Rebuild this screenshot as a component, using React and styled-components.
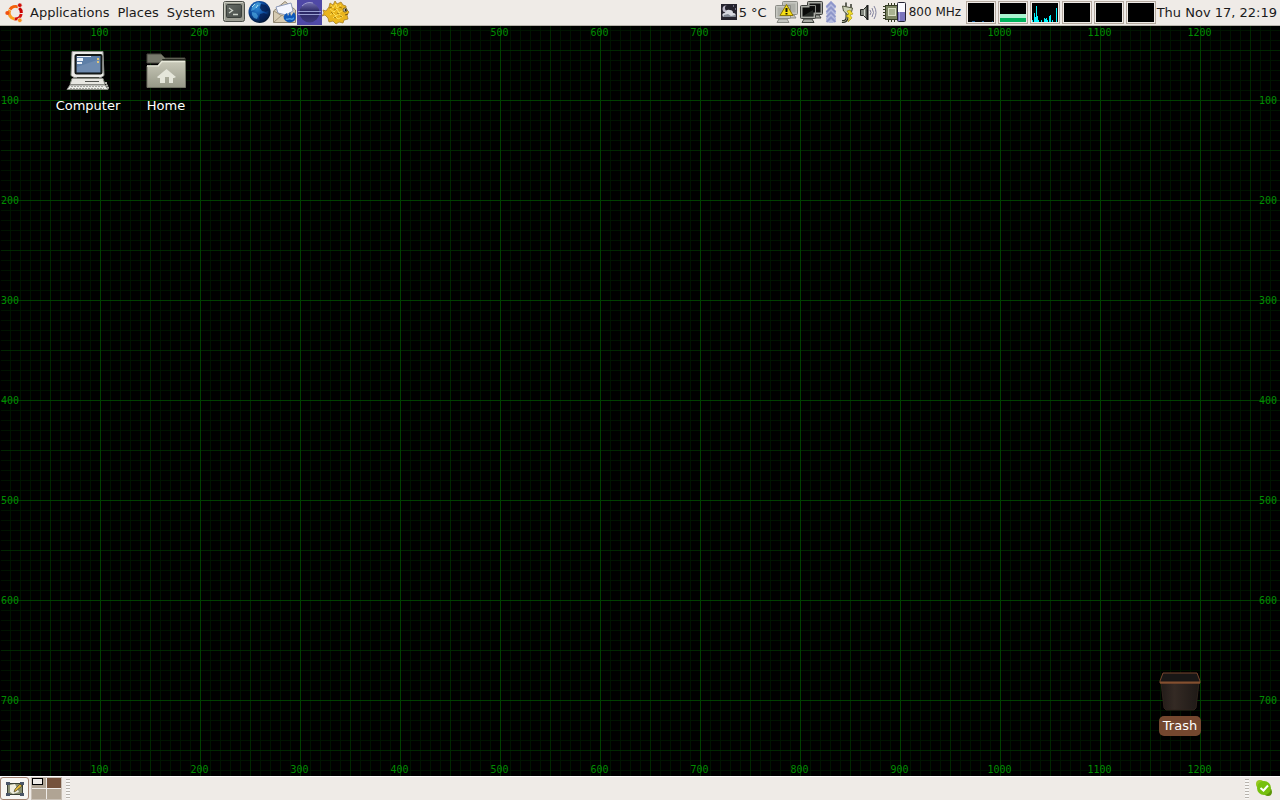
import React from "react";
import styled, { createGlobalStyle } from "styled-components";

const GlobalStyle = createGlobalStyle`
  *, *::before, *::after { box-sizing: border-box; }
  body { margin: 0; background: #000; font-family: "DejaVu Sans", sans-serif; font-size: 13px; color: #1a1a1a; }
  svg { display: block; flex: none; }
`;

const Screen = styled.div`
  display: flex;
  flex-direction: column;
  height: 100vh;
  overflow: hidden;
`;

const Panel = styled.header`
  display: flex;
  align-items: stretch;
  justify-content: space-between;
  height: 26px;
  flex: none;
  background: #efebe7;
  border-bottom: 1px solid #b9b4ad;
`;

const BottomPanel = styled(Panel).attrs({ as: "footer" })`
  height: 24px;
  border-bottom: 0;
  border-top: 1px solid #fff;
`;

const Group = styled.div`
  display: flex;
  align-items: stretch;
`;

const MenuBar = styled(Group)`
  padding-left: 1px;
`;

const PlainButton = styled.button`
  display: flex;
  align-items: center;
  margin: 0;
  padding: 0;
  border: 0;
  background: none;
  font: inherit;
  color: inherit;
  line-height: 25px;
  white-space: nowrap;
`;

const MenuButton = styled(PlainButton)`
  padding: 0 4px;
  gap: 5px;
`;

const Launchers = styled.nav`
  display: flex;
  margin-left: 3px;
`;

const TrayText = styled.span`
  min-width: ${(p) => p.$width}px;
  padding-left: 1px;
  line-height: 25px;
  font-size: ${(p) => p.$size || 13}px;
  white-space: nowrap;
`;

const Graphs = styled.div`
  display: flex;
  gap: 2px;
  padding: 1px 0 1px;
`;

const Graph = styled.div`
  width: 30px;
  height: 23px;
  border: 1px solid #b5aaa0;
  padding: 1px;
  background: #efebe7;
`;

const Clock = styled.time`
  padding: 0 3px 0 1px;
  line-height: 25px;
  white-space: nowrap;
`;

const Desktop = styled.main`
  position: relative;
  flex: 1;
  min-height: 0;
  overflow: hidden;
  display: flex;
  flex-direction: column;
  border-left: 1px solid #000;
  background-color: #000;
  background-image:
    linear-gradient(to right, #004000 1px, transparent 1px),
    linear-gradient(to bottom, #004000 1px, transparent 1px),
    linear-gradient(to right, #002800 1px, transparent 1px),
    linear-gradient(to bottom, #002800 1px, transparent 1px),
    linear-gradient(to right, #001400 1px, transparent 1px),
    linear-gradient(to bottom, #001400 1px, transparent 1px);
  background-origin: border-box;
  background-size: 100px 100px, 100px 100px, 50px 50px, 50px 50px, 10px 10px, 10px 10px;
  background-position: 0 -26px;
`;

const HorizontalRuler = styled.div`
  display: flex;
  flex: none;
  height: 13px;
  padding-left: 49px;
  overflow: hidden;
  color: #008c00;
  font: 10px/13px "DejaVu Sans Mono", monospace;
  span { flex: none; width: 100px; padding-right: 1px; text-align: center; }
`;

const Middle = styled.div`
  display: flex;
  flex: 1;
  min-height: 0;
`;

const VerticalRuler = styled.div`
  flex: none;
  width: 22px;
  padding: 12px 3px 0 0;
  overflow: hidden;
  color: #008c00;
  font: 10px/100px "DejaVu Sans Mono", monospace;
  text-align: ${(p) => p.$align};
  span { display: block; height: 100px; }
`;

const IconArea = styled.div`
  display: flex;
  flex: 1;
  align-items: flex-start;
  padding: 10px 0 0 26px;
`;

const DesktopIcon = styled(PlainButton)`
  flex-direction: column;
  width: 78px;
  gap: 3px;
  color: #fff;
`;

const IconLabel = styled.span`
  padding: 0 4px;
  border-radius: 5px;
  line-height: 20px;
  background: ${(p) => (p.$selected ? "#74472f" : "transparent")};
`;

const TrashSpot = styled.div`
  position: absolute;
  right: 61px;
  bottom: 40px;
`;

const ShowDesktop = styled(PlainButton)`
  justify-content: center;
  width: 29px;
  border: 1px solid #a48675;
  border-radius: 3px;
  background: #f8f6f3;
`;

const Switcher = styled.div`
  display: grid;
  grid-template-columns: 14px 14px;
  grid-template-rows: 10px 10px;
  gap: 1px;
  margin: 0 4px 0 2px;
  align-self: center;
  border: 1px solid #c9c0b5;
  background: #efebe7;
`;

const Workspace = styled.button`
  display: flex;
  align-items: flex-start;
  padding: 0;
  border: 0;
  background: ${(p) => (p.$active ? "#75523c" : "#b0a494")};
`;

const MiniWindow = styled.span`
  width: 11px;
  height: 7px;
  border: 1px solid #000;
  background: #efebe7;
`;

const Grip = styled.div`
  width: 4px;
  margin: 2px 0 1px;
  background: repeating-linear-gradient(#b8b3ad 0 1px, #f8f7f5 1px 3px);
`;

const Tray = styled.div`
  display: flex;
  align-items: center;
  padding: 0 7px 2px 6px;
`;

const UbuntuIcon = () => (
  <svg width="20" height="24" viewBox="0 0 20 24" fill="none">
    <path d="M5.3 15.5A6.3 6.3 0 0 1 4.8 9" stroke="#f79a2c" strokeWidth="3" />
    <path d="M5 8.6A6.3 6.3 0 0 1 13 6" stroke="#f4600a" strokeWidth="3" />
    <path d="M14.2 6.9A6.3 6.3 0 0 1 16.3 12" stroke="#c80000" strokeWidth="3" />
    <path d="M16.2 13A6.3 6.3 0 0 1 9.5 18" stroke="#d4100c" strokeWidth="3" />
    <path d="M9.5 18A6.3 6.3 0 0 1 5 15" stroke="#fca01c" strokeWidth="3" />
    <circle cx="2.4" cy="12" r="2.1" fill="#f25010" />
    <circle cx="14.8" cy="4.2" r="2.3" fill="#d01008" stroke="#efebe7" strokeWidth=".7" />
    <circle cx="14.8" cy="19.3" r="2.3" fill="#fc8c18" stroke="#efebe7" strokeWidth=".7" />
  </svg>
);

const TerminalIcon = () => (
  <svg width="25" height="25" viewBox="0 0 25 25">
    <defs>
      <linearGradient id="term" x2="1" y2="1"><stop stopColor="#666b66" /><stop offset="1" stopColor="#454a46" /></linearGradient>
    </defs>
    <rect x="1.5" y="1.5" width="21" height="20" rx="2" fill="#9d9e94" stroke="#4c4e49" />
    <path d="M2.5 20V2.5H21" stroke="#c9cabf" fill="none" />
    <rect x="4.5" y="4.5" width="15" height="13" rx="1" fill="url(#term)" stroke="#3a3f3b" />
    <path d="M7 8l3.5 2.5L7 13M11 14.5h5" stroke="#cfd4cb" strokeWidth="1.3" fill="none" />
  </svg>
);

const GlobeIcon = () => (
  <svg width="25" height="25" viewBox="0 0 25 25">
    <defs>
      <radialGradient id="globe" cx=".4" cy=".35" r=".65">
        <stop offset="0" stopColor="#2c86d4" /><stop offset=".6" stopColor="#0a4496" /><stop offset="1" stopColor="#031634" />
      </radialGradient>
    </defs>
    <circle cx="12.5" cy="12" r="11" fill="url(#globe)" />
    <path d="M7 4l4-2 3 1-1 3-3 1-3 3-3 1 1-4zM5 12l4 1 2 3-1 3-3-1-2-3z" fill="#56b4e8" opacity=".6" />
    <path d="M14 4l5 1 3 5-3 2-4-1-2-3zM13 14l4-1 4 2-3 5-4 2-2-4z" fill="#041c4c" opacity=".75" />
    <path d="M5 7l3-3M9 8l2-3" stroke="#a9def4" />
  </svg>
);

const MailIcon = () => (
  <svg width="25" height="25" viewBox="0 0 25 25">
    <path d="M1.500 11L13 1.500l10.500 8.500v12.500h-22z" fill="#d8ceb9" stroke="#8f846f" />
    <path d="M4 7l15-4 2 8-7 4-8-2z" fill="#f4f6ff" stroke="#8d9ab8" />
    <path d="M2 11l9 6 12-6v11H2z" fill="#d7cbb2" />
    <path d="M2 22l8-7 4 3" fill="none" stroke="#a1957c" />
    <path d="M2 11l8 5" stroke="#a1957c" />
    <path d="M12 19c-1-3 1-5 3-6l1 3 2-4 1 4 3-4c3 5 2 9-2 10-3 1-6 0-8-3z" fill="#0f58b8" />
    <path d="M14 19c2 1 3-1 5 0s2-1 3-1" stroke="#4b9ae4" strokeWidth="1.500" fill="none" />
  </svg>
);

const EclipseIcon = () => (
  <svg width="25" height="25" viewBox="0 0 25 25">
    <defs>
      <linearGradient id="orb" x2="0" y2="1">
        <stop stopColor="#7370b0" /><stop offset=".45" stopColor="#2a2764" /><stop offset="1" stopColor="#3f3b7c" />
      </linearGradient>
    </defs>
    <path fill="#4f48a6" d="M0 0h25v25H0z" />
    <circle cx="12.500" cy="12.500" r="10" fill="url(#orb)" />
    <path d="M1 11.500h23M1 14.500h23" stroke="#9aa0d2" />
    <path d="M5 6Q10 1 16 3" stroke="#9a98cc" fill="none" />
  </svg>
);

const FishIcon = () => (
  <svg width="28" height="25" viewBox="0 0 28 25">
    <path d="M1 10l3 1 3-4 1-4 3 2 2-4 2 3 4-2 2 3 3 1v3l3 3-2 3 1 4-4 1-1 3-4-1-3 2-3-3-4 1-1-4-3-3-3 1 2-3z" fill="#e9b41d" stroke="#a88024" strokeWidth=".8" />
    <path d="M9 5l2 3 3-4 1 4 4-3M8 9l4 3 3-3 2 4 4-3M8 15l3-2 3 3 3-2 4 3M11 18l2-2 3 3 4-2" stroke="#ffdf55" fill="none" />
    <path d="M7 8l3-1M12 9l2 1M17 7l3 1M9 12l2 2M15 13l2 1M12 17l2 1M18 16l2 1" stroke="#a57d12" />
    <circle cx="23" cy="10" r="2" fill="#f5f1dd" stroke="#6a591f" /><circle cx="23.500" cy="10" r="1" fill="#111" />
    <path d="M23 15l3-1" stroke="#785914" />
  </svg>
);

const WeatherIcon = () => (
  <svg width="18" height="25" viewBox="0 0 18 25">
    <path fill="#25232d" d="M1 4h16v16H1z" />
    <circle cx="6" cy="9" r="3.500" fill="#bdb9c7" /><circle cx="8" cy="8" r="3" fill="#25232d" />
    <path d="M3 17q-2-4 2-4 1-4 5-3 3 0 3 3 4 0 2 4z" fill="#d7d9e0" />
    <path d="M3 17h13l-1-2-4 1-3-2-4 1z" fill="#828894" /><path d="M13 6h1M15 9h1" stroke="#c1bde0" />
  </svg>
);

const Monitors = ({ warning }) => (
  <svg width="25" height="25" viewBox="0 0 25 25">
    <g stroke={warning ? "#8b8c86" : "#3e403c"} fill={warning ? "#c6c7c1" : "#a9aba4"}>
      <path d="M13 15h7l2 3H12z" /><rect x="8.500" y="1.500" width="15" height="13" rx="1" />
      <path d="M5 19h8l2 3.500H3z" /><rect x="1.500" y="5.500" width="15" height="13" rx="1" />
    </g>
    <rect x="10.500" y="3.500" width="11" height="9" fill={warning ? "#adafa8" : "#111"} />
    <path d="M8.500 5.500h8v9" stroke={warning ? "#8b8c86" : "#8e908a"} fill="none" />
    <rect x="3.500" y="7.500" width="11" height="9" fill={warning ? "#adafa8" : "#090a09"} />
    {!warning && <path d="M4 16l10-6v6z" fill="#262a26" />}
    {warning && <><path d="M12.500 4.500L6 15.500h13z" fill="#f7df13" stroke="#8d7805" strokeLinejoin="round" /><path d="M12.500 8v4M12.500 13v1.500" stroke="#171408" strokeWidth="2" /></>}
  </svg>
);

const ArrowsIcon = () => (
  <svg width="14" height="25" viewBox="0 0 14 25">
    <path d="M7 1l5 5v2l-2 1 2 3v2l-2 1 2 3v2l-3 3H5l-3-3v-2l2-3-2-1v-2l2-3-2-1V6z" fill="#b7bcdf" />
    <path d="M2.500 7L7 2.500 11.500 7M2.500 12L7 7.500l4.500 4.500M2.500 17L7 12.500l4.500 4.500M2.500 22L7 17.500l4.500 4.500" stroke="#8f97ca" strokeWidth="2" fill="none" />
  </svg>
);

const PlugIcon = () => (
  <svg width="18" height="25" viewBox="0 0 18 25">
    <path d="M9 12v5q0 5-5 4.500" fill="none" stroke="#292c20" strokeWidth="3" />
    <path d="M9 13v4q0 5-5 4.500" fill="none" stroke="#a8ad91" />
    <path d="M8 7V2.500M13 8V4" stroke="#34372c" strokeWidth="1.500" />
    <path d="M4.500 6l10 2-1 4-4 2.500-4-3.500z" fill="#ccd0b7" stroke="#50543e" />
    <path d="M12 10l3 4-3 1 2 3-4 4 1-4-3-2 3-2-2-3z" fill="#f2dd23" stroke="#a19012" strokeWidth=".6" />
  </svg>
);

const SpeakerIcon = () => (
  <svg width="24" height="25" viewBox="0 0 24 25">
    <path d="M4.500 9.500h3l4-4v14l-4-4h-3z" fill="#84887e" stroke="#262824" /><path d="M8.500 9.500V16" stroke="#d8dbd2" />
    <path d="M11.500 5v15" stroke="#1b1c1a" strokeWidth="2" />
    <path d="M14 10q2 2.500 0 5M16 8q3 4.500 0 9M18 6q4 6.500 0 13" fill="none" stroke="#83839f" />
  </svg>
);

const CpuIcon = () => (
  <svg width="28" height="25" viewBox="0 0 28 25">
    <path d="M3 6.500h3M3 9.500h3M3 12.500h3M3 15.500h3M3 18.500h3M8.500 3v4M11.500 3v4M14.500 3v4M8.500 18v4M11.500 18v4M14.500 18v4" stroke="#343a22" />
    <rect x="5.500" y="5.500" width="13" height="14" fill="#7d8663" stroke="#353d25" />
    <rect x="8.500" y="8.500" width="7" height="7" fill="#a9b391" stroke="#dbe1c7" />
    <rect x="17.500" y="2.500" width="8" height="19" rx="1" fill="#fafaff" stroke="#252435" />
    <path fill="#7974bc" d="M18 12h7v9h-7z" /><path stroke="#aaa5df" d="M19.500 12v9" />
  </svg>
);

const GraphFace = ({ kind }) => (
  <svg width="26" height="19" viewBox="0 0 26 19" shapeRendering="crispEdges">
    <path fill="#000" d="M0 0h26v19H0z" />
    {kind === "cpu" && <path fill="#12598d" d="M4 18h3v1H4zM14 18h2v1h-2zM24 18h1v1h-1z" />}
    {kind === "memory" && <><path fill="#aaf5d0" d="M0 11h26v4H0z" /><path fill="#00b35b" d="M0 15h26v4H0z" /></>}
    {kind === "network" && <path stroke="#00f5ff" d="M.5 19v-2M2.500 19v-9M3.500 19v-5M4.500 19V3M5.500 19v-6M6.500 19v-2M9.500 19v-2M12.500 19v-4M13.500 19v-3M14.500 19v-4M15.500 19v-2M17.500 19v-6M18.500 19v-7M20.500 19v-2M24.500 19V5" />}
  </svg>
);

const ComputerIcon = () => (
  <svg width="48" height="44" viewBox="0 0 48 44">
    <path d="M8 2.500h31l1 24-3 2H10l-3-2z" fill="#ecece8" stroke="#8c8d88" />
    <rect x="11.500" y="6" width="26" height="18.500" rx="1" fill="#5e7fa7" stroke="#141817" strokeWidth="2" />
    <path d="M13 18l23-8v13H13z" fill="#7894b5" opacity=".65" />
    <path d="M13 7.500h14" stroke="#e9f1f8" /><path d="M13 9h6v3h-6zM13 13h5v2h-5z" fill="#e9f1f8" />
    <path d="M33 9h2v2h-2zM33 12h2v2h-2z" fill="#dfc477" />
    <path d="M13 28h22v2H13z" fill="#44463f" />
    <path d="M8 29.500h31l2 6H6z" fill="#e7e7e1" stroke="#8a8c85" /><path d="M21 32.500h14" stroke="#51534e" />
    <path d="M6 36h35l3 4.500H3z" fill="#ecede8" stroke="#8a8b85" /><path d="M7 37.500h32M6 39.500h34" stroke="#a3a59e" strokeDasharray="2 1" />
    <path d="M42 33v3l2 1v3" stroke="#b4b5af" fill="none" strokeWidth="2" strokeDasharray="2 1" />
  </svg>
);

const HomeIcon = () => (
  <svg width="48" height="44" viewBox="0 0 48 44">
    <defs><linearGradient id="folder" x2="0" y2="1"><stop stopColor="#c9c9b9" /><stop offset="1" stopColor="#969887" /></linearGradient></defs>
    <path d="M5 5h14l4 4h20v5H5z" fill="#77796c" stroke="#48493e" /><path d="M20 10h23v2H21z" fill="#282a22" />
    <path d="M5 38.500V17h11l4-5h23.500v26.500z" fill="url(#folder)" stroke="#717365" />
    <path d="M5 17h11l4-4.500h23" stroke="#e8e9da" strokeWidth="1.500" fill="none" />
    <path d="M24.500 20l9.500 8-2 1h-1v5h-4v-6h-4v6h-5v-5h-2l-1-1z" fill="#e5e6da" />
  </svg>
);

const TrashIcon = () => (
  <svg width="48" height="44" viewBox="0 -1 48 44">
    <defs><linearGradient id="bin" x2="1"><stop stopColor="#211b18" /><stop offset=".35" stopColor="#342a24" /><stop offset="1" stopColor="#1e1916" /></linearGradient></defs>
    <path d="M5 12h38l-3 26-2 2H10l-2-2z" fill="url(#bin)" stroke="#2f231c" />
    <path d="M7 3h34l3 8v2H4v-2z" fill="#191716" stroke="#78452c" />
    <path d="M4 12.500h40" stroke="#84502f" strokeWidth="2" />
  </svg>
);

const NotesIcon = () => (
  <svg width="20" height="18" viewBox="0 0 20 18">
    <rect x="2.500" y="3.500" width="15" height="11" fill="#8a8f72" stroke="#3a3f34" />
    <path d="M1 2h4v3H1zM15 2h4v3h-4zM1 13h4v3H1zM15 13h4v3h-4z" fill="#4a5568" />
    <path d="M5 5l5-1 4 8-6 2-3-2z" fill="#f0eee0" /><path d="M9 12l1-3 5-5 2 2-6 5z" fill="#e0b73a" stroke="#4b4525" strokeWidth=".7" />
  </svg>
);

const CheckIcon = () => (
  <svg width="18" height="18" viewBox="0 0 18 18">
    <circle cx="5" cy="5" r="4" fill="#97c820" /><circle cx="13" cy="13" r="4" fill="#5c9507" />
    <circle cx="9" cy="9" r="7" fill="#76c00e" /><path d="M5.500 9l3 2.500 4.500-5" stroke="#fff" strokeWidth="2" fill="none" />
  </svg>
);

const columns = Array.from({ length: 12 }, (_, i) => (i + 1) * 100);
const rows = columns.slice(0, 7);
const launchers = [
  ["Terminal", TerminalIcon],
  ["Web browser", GlobeIcon],
  ["Mail", MailIcon],
  ["Eclipse", EclipseIcon],
  ["Blowfish", FishIcon],
];

export default function App() {
  return (
    <Screen>
      <GlobalStyle />
      <Panel>
        <MenuBar>
          <MenuButton><UbuntuIcon />Applications</MenuButton>
          <MenuButton>Places</MenuButton>
          <MenuButton>System</MenuButton>
          <Launchers aria-label="Launchers">
            {launchers.map(([name, Icon]) => <PlainButton key={name} aria-label={name}><Icon /></PlainButton>)}
          </Launchers>
        </MenuBar>
        <Group>
          <WeatherIcon />
          <TrayText $width={36}>5 °C</TrayText>
          <Monitors warning />
          <Monitors />
          <ArrowsIcon />
          <PlugIcon />
          <SpeakerIcon />
          <CpuIcon />
          <TrayText $width={58} $size={12}>800 MHz</TrayText>
          <Graphs>
            {["cpu", "memory", "network", "swap", "load", "disk"].map((kind) => (
              <Graph key={kind}><GraphFace kind={kind} /></Graph>
            ))}
          </Graphs>
          <Clock>Thu Nov 17, 22:19</Clock>
        </Group>
      </Panel>
      <Desktop>
        <HorizontalRuler>{columns.map((n) => <span key={n}>{n}</span>)}</HorizontalRuler>
        <Middle>
          <VerticalRuler $align="left">{rows.map((n) => <span key={n}>{n}</span>)}</VerticalRuler>
          <IconArea>
            <DesktopIcon><ComputerIcon /><IconLabel>Computer</IconLabel></DesktopIcon>
            <DesktopIcon><HomeIcon /><IconLabel>Home</IconLabel></DesktopIcon>
          </IconArea>
          <VerticalRuler $align="right">{rows.map((n) => <span key={n}>{n}</span>)}</VerticalRuler>
        </Middle>
        <HorizontalRuler>{columns.map((n) => <span key={n}>{n}</span>)}</HorizontalRuler>
        <TrashSpot>
          <DesktopIcon><TrashIcon /><IconLabel $selected>Trash</IconLabel></DesktopIcon>
        </TrashSpot>
      </Desktop>
      <BottomPanel>
        <Group>
          <ShowDesktop aria-label="Show desktop"><NotesIcon /></ShowDesktop>
          <Switcher>
            <Workspace aria-label="Workspace 1"><MiniWindow /></Workspace>
            <Workspace aria-label="Workspace 2" $active />
            <Workspace aria-label="Workspace 3" />
            <Workspace aria-label="Workspace 4" />
          </Switcher>
          <Grip />
        </Group>
        <Group>
          <Grip />
          <Tray><CheckIcon /></Tray>
        </Group>
      </BottomPanel>
    </Screen>
  );
}
